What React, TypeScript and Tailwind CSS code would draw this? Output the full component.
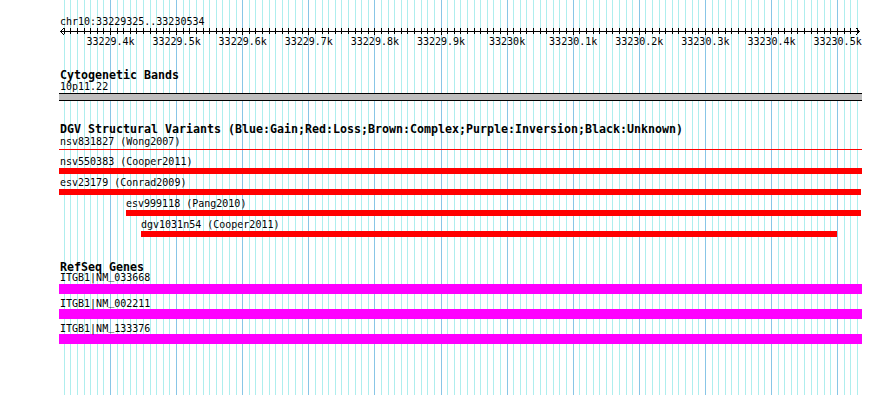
import React from 'react';

const START = 33229400;
const X0 = 110;
const PX_PER_BP = 0.661;

const toX = (bp: number) => Math.round(X0 + (bp - START) * PX_PER_BP);

const ticks: { x: number; major: boolean }[] = [];
for (let bp = 33229330; bp <= 33230530; bp += 10) {
  ticks.push({ x: toX(bp), major: bp % 100 === 0 });
}

const labels = [
  '33229.4k', '33229.5k', '33229.6k', '33229.7k', '33229.8k', '33229.9k',
  '33230k', '33230.1k', '33230.2k', '33230.3k', '33230.4k', '33230.5k',
];

const Grid = () => (
  <svg className="absolute inset-0" width={890} height={395} shapeRendering="crispEdges">
    {ticks.map((t, i) => (
      <line
        key={i}
        x1={t.x + 0.5}
        x2={t.x + 0.5}
        y1={0}
        y2={395}
        stroke={t.major ? '#88c6e6' : '#aeeeee'}
        strokeWidth={1}
      />
    ))}
  </svg>
);

const Ruler = () => (
  <svg className="block mt-px" width={890} height={8} shapeRendering="crispEdges">
    <line x1={60} x2={860} y1={4.5} y2={4.5} stroke="#000" />
    {ticks.map((t, i) => (
      <line key={i} x1={t.x + 0.5} x2={t.x + 0.5} y1={1} y2={t.major ? 8 : 7} stroke="#000" />
    ))}
    <polyline points="64,1 60.5,4.5 64,8" fill="none" stroke="#000" shapeRendering="auto" />
    <polyline points="856,1 859.5,4.5 856,8" fill="none" stroke="#000" shapeRendering="auto" />
  </svg>
);

const Label = ({ children, mt }: { children: React.ReactNode; mt: string }) => (
  <div className={`${mt} ml-[60px] h-[10px] pt-px leading-[10px] text-[11.63px] font-bold whitespace-nowrap`}>
    {children}
  </div>
);

const Txt = ({ children, cls }: { children: React.ReactNode; cls: string }) => (
  <div className={`${cls} h-[11px] pt-px leading-[11px] text-[10px] whitespace-nowrap`}>
    <div className="scale-y-110 origin-[50%_9px]">{children}</div>
  </div>
);

// underscore sits on the baseline row in the bitmap font
const Gene = ({ id }: { id: string }) => (
  <>
    ITGB1|NM<span className="relative -top-[2px]">_</span>
    {id}
  </>
);

export default function App() {
  return (
    <div className="relative w-[890px] h-[395px] bg-white overflow-hidden text-black font-['DejaVu_Sans_Mono',monospace]">
      <Grid />
      <div className="relative flex flex-col">
        <Txt cls="mt-[15px] ml-[60px]">chr10:33229325..33230534</Txt>
        <Ruler />
        <div className="relative h-[11px] pt-px leading-[11px] text-[10px]">
          {labels.map((l, i) => (
            <span
              key={l}
              className="absolute top-px -translate-x-1/2 scale-y-110 whitespace-nowrap"
              style={{ left: X0 + i * 66.1 + 0.5 }}
            >
              {l}
            </span>
          ))}
        </div>

        <Label mt="mt-[23px]">Cytogenetic Bands</Label>
        <Txt cls="mt-px ml-[60px]">10p11.22</Txt>
        <div className="mt-[2px] ml-[59px] w-[803px] h-[8px] bg-[#bebebe] border-y border-black" />

        <Label mt="mt-[22px]">
          DGV Structural Variants (Blue:Gain;Red:Loss;Brown:Complex;Purple:Inversion;Black:Unknown)
        </Label>
        <Txt cls="mt-[2px] ml-[60px]">nsv831827 (Wong2007)</Txt>
        <div className="mt-[3px] ml-[59px] w-[803px] h-px bg-[#ff0000]" />
        <Txt cls="mt-[5px] ml-[60px]">nsv550383 (Cooper2011)</Txt>
        <div className="mt-[2px] ml-[59px] w-[803px] h-[6px] bg-[#ff0000]" />
        <Txt cls="mt-[2px] ml-[60px]">esv23179 (Conrad2009)</Txt>
        <div className="mt-[2px] ml-[59px] w-[802px] h-[6px] bg-[#ff0000]" />
        <Txt cls="mt-[2px] ml-[126px]">esv999118 (Pang2010)</Txt>
        <div className="mt-[2px] ml-[126px] w-[735px] h-[6px] bg-[#ff0000]" />
        <Txt cls="mt-[2px] ml-[141px]">dgv1031n54 (Cooper2011)</Txt>
        <div className="mt-[2px] ml-[141px] w-[696px] h-[6px] bg-[#ff0000]" />

        <Label mt="mt-[24px]">RefSeq Genes</Label>
        <Txt cls="ml-[60px]">
          <Gene id="033668" />
        </Txt>
        <div className="mt-[2px] ml-[59px] w-[803px] h-[10px] bg-[#ff00ff]" />
        <Txt cls="mt-[3px] ml-[60px]">
          <Gene id="002211" />
        </Txt>
        <div className="mt-px ml-[59px] w-[803px] h-[10px] bg-[#ff00ff]" />
        <Txt cls="mt-[3px] ml-[60px]">
          <Gene id="133376" />
        </Txt>
        <div className="mt-px ml-[59px] w-[803px] h-[10px] bg-[#ff00ff]" />
      </div>
    </div>
  );
}
